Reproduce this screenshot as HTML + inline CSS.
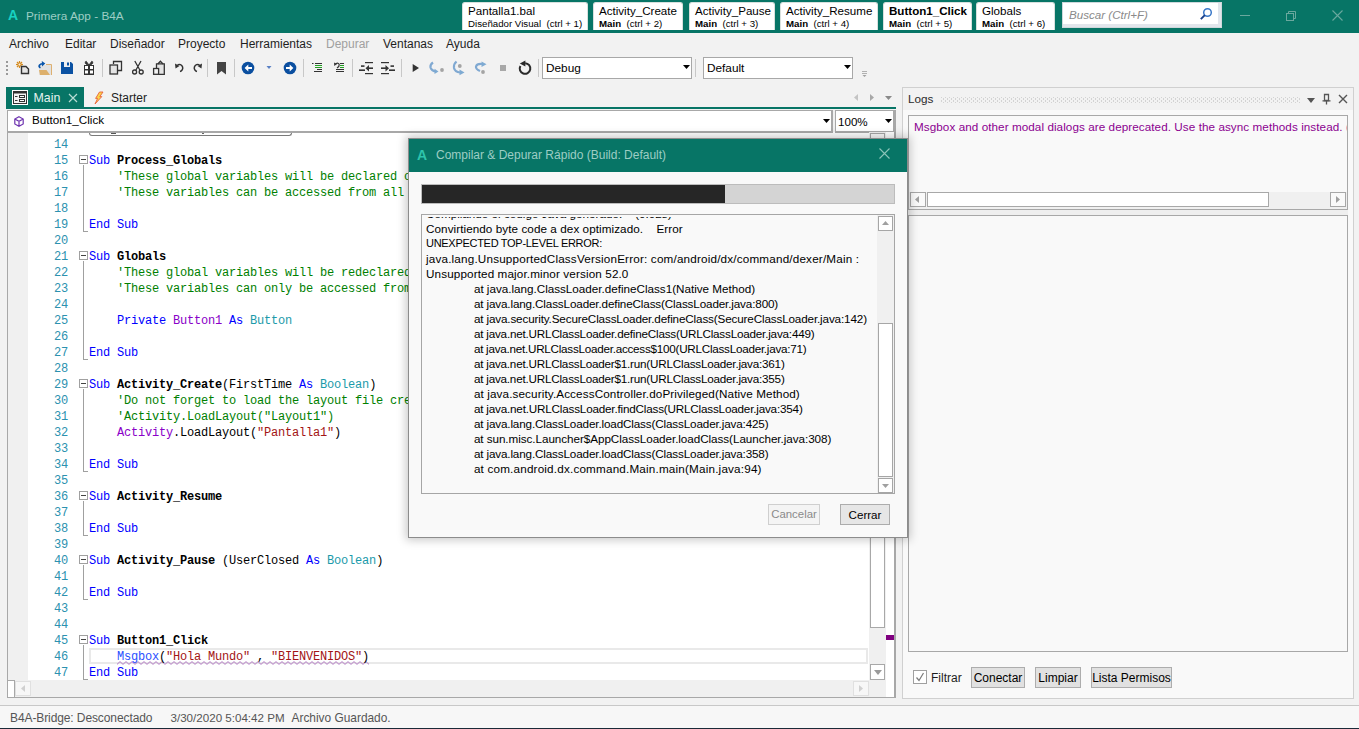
<!DOCTYPE html>
<html><head><meta charset="utf-8">
<style>
*{margin:0;padding:0;box-sizing:border-box}
html,body{width:1359px;height:729px;overflow:hidden;background:#f2f2f2;font-family:"Liberation Sans",sans-serif;font-size:12px;color:#000}
.a{position:absolute}
.t{position:absolute;white-space:nowrap;line-height:1}
#title{left:0;top:0;width:1359px;height:33px;background:#077566}
.tab{position:absolute;top:2px;height:28px;background:#fff;border:1px solid #d8e0de;border-bottom:none;border-radius:3px 3px 0 0}
.tab .n{position:absolute;left:5px;top:1.5px;font-size:11.6px;white-space:nowrap;line-height:1}
.tab .s{position:absolute;left:5px;top:15.5px;font-size:9.7px;white-space:nowrap;line-height:1}
.tab .s b{font-weight:bold}
.menu{position:absolute;top:38px;font-size:12px;color:#1e1e1e;white-space:nowrap;line-height:1}
.sep{position:absolute;top:59px;width:1px;height:18px;background:#c4c4c4}
.code{position:absolute;left:82px;top:0;margin-top:1px;letter-spacing:-0.2px;font-family:"Liberation Mono",monospace;font-size:12px;white-space:pre;line-height:16px}
.ln{position:absolute;margin-top:1px;letter-spacing:-0.2px;font-family:"Liberation Mono",monospace;font-size:12px;color:#2b91af;line-height:16px;text-align:right;width:40px;left:21px}
.fb{position:absolute;left:72px;width:9px;height:9px;border:1px solid #a0a0a0;background:#fff}
.fb:after{content:"";position:absolute;left:1px;top:3px;width:5px;height:1px;background:#444}
.fl{position:absolute;left:76px;width:5px;border-left:1px solid #a0a0a0;border-bottom:1px solid #a0a0a0}
.mb{color:#2a50ff}
.kw{color:#0000ff}.cm{color:#008000}.st{color:#a31515}.ty{color:#1b9aaa}.pu{color:#8a00c8}.bd{font-weight:bold}
.btn{position:absolute;background:#e1e1e1;border:1px solid #adadad;font-size:12px;text-align:center;line-height:18px}
</style></head><body>

<!-- title bar -->
<div id="title" class="a">
  <div class="t" style="left:8px;top:8px;font-size:14px;font-weight:bold;color:#18d2c2">A</div>
  <div class="t" style="left:26px;top:10.5px;font-size:11.8px;color:#9dcdc4">Primera App - B4A</div>
  <div class="tab" style="left:462px;width:126px"><div class="n">Pantalla1.bal</div><div class="s">Diseñador Visual&nbsp; (ctrl + 1)</div></div>
  <div class="tab" style="left:593px;width:90px"><div class="n">Activity_Create</div><div class="s"><b>Main</b>&nbsp; (ctrl + 2)</div></div>
  <div class="tab" style="left:689px;width:86px"><div class="n">Activity_Pause</div><div class="s"><b>Main</b>&nbsp; (ctrl + 3)</div></div>
  <div class="tab" style="left:780px;width:98px"><div class="n">Activity_Resume</div><div class="s"><b>Main</b>&nbsp; (ctrl + 4)</div></div>
  <div class="tab" style="left:883px;width:89px"><div class="n" style="font-weight:bold">Button1_Click</div><div class="s"><b>Main</b>&nbsp; (ctrl + 5)</div></div>
  <div class="tab" style="left:976px;width:79px"><div class="n">Globals</div><div class="s"><b>Main</b>&nbsp; (ctrl + 6)</div></div>
  <div class="a" style="left:1062px;top:2px;width:160px;height:26px;background:#fff;border:1px solid #d0d8dc;box-shadow:inset -3px -3px 0 #e2e6ec"></div>
  <div class="t" style="left:1069px;top:8.5px;font-size:11.6px;font-style:italic;color:#8a8a8a">Buscar (Ctrl+F)</div>
  <svg class="a" style="left:1199px;top:7px" width="14" height="14" viewBox="0 0 14 14"><circle cx="8.5" cy="5.5" r="3.8" fill="none" stroke="#3a78c8" stroke-width="1.5"/><line x1="5.8" y1="8.2" x2="1.8" y2="12.2" stroke="#1a3f8a" stroke-width="1.9"/></svg>
  <div class="a" style="left:1240px;top:15px;width:10px;height:1px;background:#6aa89e"></div>
  <svg class="a" style="left:1285px;top:10px" width="12" height="11" viewBox="0 0 12 11"><rect x="1.5" y="3.5" width="7" height="7" fill="none" stroke="#6aa89e"/><path d="M3.5 3.5V1.5H10.5V8.5H8.5" fill="none" stroke="#6aa89e"/></svg>
  <svg class="a" style="left:1332px;top:10px" width="11" height="11" viewBox="0 0 11 11"><path d="M0.5 0.5L10.5 10.5M10.5 0.5L0.5 10.5" stroke="#6aa89e" stroke-width="1.1"/></svg>
</div>

<!-- menu -->
<div class="menu" style="left:9px">Archivo</div>
<div class="menu" style="left:65px">Editar</div>
<div class="menu" style="left:110px">Diseñador</div>
<div class="menu" style="left:178px">Proyecto</div>
<div class="menu" style="left:240px">Herramientas</div>
<div class="menu" style="left:326px;color:#a0a0a0">Depurar</div>
<div class="menu" style="left:383px">Ventanas</div>
<div class="menu" style="left:446px">Ayuda</div>

<!-- toolbar placeholder -->
<div id="toolbar"><svg class="a" style="left:0;top:0" width="900" height="86" viewBox="0 0 900 86">
<g fill="#9a9a9a"><rect x="6" y="61" width="2" height="2"/><rect x="6" y="65" width="2" height="2"/><rect x="6" y="69" width="2" height="2"/><rect x="6" y="73" width="2" height="2"/></g>
<!-- new -->
<g stroke="#d58a1e" stroke-width="1.2"><line x1="19.5" y1="61" x2="19.5" y2="68"/><line x1="16" y1="64.5" x2="23" y2="64.5"/><line x1="17" y1="62" x2="22" y2="67"/><line x1="22" y1="62" x2="17" y2="67"/></g>
<circle cx="19.5" cy="64.5" r="1.5" fill="#f8f0e0" stroke="#d58a1e"/>
<path d="M21.5 66.5H26L28.5 69V73.5H21.5Z" fill="#e4e4e4" stroke="#333" stroke-width="1.4"/>
<!-- open -->
<rect x="39" y="65" width="12.5" height="10" fill="#e2e2e2"/>
<path d="M46 64.5H51.5V75" fill="none" stroke="#deb070" stroke-width="1"/>
<path d="M39 70H46.5L50 75H40Z" fill="#ddb06c"/>
<path d="M40.5 67.8Q38.3 66.6 39.6 65Q41 63.6 43.8 63.8" fill="none" stroke="#0a55aa" stroke-width="1.7"/>
<path d="M41.8 61L45.3 63.6L42 66.6Z" fill="#0a55aa"/>
<!-- save -->
<path d="M61 62H71L73 64V74H61Z" fill="#0b52a3"/>
<rect x="64" y="62" width="6" height="5" fill="#f0f0f0"/>
<rect x="67" y="62.5" width="2" height="3" fill="#0b52a3"/>
<!-- gift -->
<rect x="84" y="65" width="10" height="10" fill="#333"/>
<g fill="#fff"><rect x="85" y="66" width="3" height="3"/><rect x="90" y="66" width="3" height="3"/><rect x="85" y="70.5" width="3" height="3"/><rect x="90" y="70.5" width="3" height="3"/></g>
<path d="M89 65L86.2 61.2Q85 61.3 85.2 63.2Q85.6 64.6 89 65ZM89 65L91.8 61.2Q93 61.3 92.8 63.2Q92.4 64.6 89 65Z" fill="#333" stroke="#333" stroke-width="0.8"/>
<rect x="102" y="59" width="1" height="18" fill="#c8c8c8"/>
<!-- copy -->
<path d="M113.5 64V61.5H121.5V70.5H118" fill="none" stroke="#333" stroke-width="1.3"/>
<rect x="110" y="65" width="7.5" height="9" fill="#e4e4e4" stroke="#333" stroke-width="1.3"/>
<!-- cut -->
<g fill="none" stroke="#333" stroke-width="1.3"><circle cx="134.6" cy="72" r="2"/><circle cx="141.2" cy="72" r="2"/><path d="M135.8 70.2L141 61M140 70.2L134.8 61"/></g>
<!-- paste -->
<path d="M156.5 68V63.8H164.3V74.3H158.5" fill="#e4e4e4" stroke="#333" stroke-width="1.3"/>
<path d="M157.8 64L160.4 61.2L163 64" fill="none" stroke="#333" stroke-width="1.3"/>
<rect x="153.6" y="68.5" width="5" height="5.8" fill="#f4f4f4" stroke="#333" stroke-width="1.3"/>
<!-- undo -->
<path d="M177.5 64.8A3.6 3.6 0 1 1 180 71.5" fill="none" stroke="#333" stroke-width="1.5"/>
<path d="M175 63.5L175.5 68.5L179.5 66Z" fill="#333"/>
<!-- redo -->
<path d="M199.5 64.8A3.6 3.6 0 1 0 197 71.5" fill="none" stroke="#333" stroke-width="1.5"/>
<path d="M202 63.5L201.5 68.5L197.5 66Z" fill="#333"/>
<rect x="207" y="59" width="1" height="18" fill="#c8c8c8"/>
<!-- bookmark -->
<path d="M217 62H226V74.5L221.5 71L217 74.5Z" fill="#444"/>
<rect x="234" y="59" width="1" height="18" fill="#c8c8c8"/>
<!-- back -->
<circle cx="248" cy="68" r="6.3" fill="#0b4fa0"/>
<path d="M252 68H246" stroke="#fff" stroke-width="2"/><path d="M248.3 64.6L244.6 68L248.3 71.4Z" fill="#fff"/>
<path d="M266.5 66H271.5L269 69Z" fill="#5a80c4"/>
<!-- fwd -->
<circle cx="290" cy="68" r="6.3" fill="#0b4fa0"/>
<path d="M286 68H292" stroke="#fff" stroke-width="2"/><path d="M289.7 64.6L293.4 68L289.7 71.4Z" fill="#fff"/>
<rect x="303" y="59" width="1" height="18" fill="#c8c8c8"/>
<!-- block comment -->
<g fill="#333"><rect x="312" y="63" width="1.5" height="1"/><rect x="315" y="63" width="7" height="1"/><rect x="317" y="69" width="5" height="1"/><rect x="314" y="71" width="8" height="1"/></g>
<g fill="#22a022"><rect x="315" y="65" width="7" height="1"/><rect x="315" y="67" width="7" height="1"/></g>
<!-- uncomment -->
<g fill="#333"><rect x="340" y="63" width="4" height="1"/><rect x="336" y="69" width="8" height="1"/><rect x="336" y="71" width="8" height="1"/></g>
<g fill="#22a022"><rect x="340" y="65" width="4" height="1"/><rect x="340" y="67" width="4" height="1"/></g>
<path d="M335.5 64Q338.5 62.2 339.2 64.5Q339.5 66.5 337 68" fill="none" stroke="#333" stroke-width="1.2"/>
<path d="M334 62.5L334.3 66L337 64Z" fill="#333"/>
<rect x="352" y="59" width="1" height="18" fill="#c8c8c8"/>
<!-- outdent -->
<g fill="#333"><rect x="365" y="62" width="8" height="1.2"/><rect x="361" y="65.3" width="3.5" height="1.6"/><rect x="359" y="69.4" width="6" height="1.6"/><rect x="365" y="73" width="8" height="1.2"/><rect x="368" y="67.4" width="5" height="1.6"/></g>
<path d="M365.5 68.2L369 65V71.4Z" fill="#333"/>
<!-- indent -->
<g fill="#333"><rect x="381" y="62" width="8" height="1.2"/><rect x="390.5" y="65.3" width="3.5" height="1.6"/><rect x="389" y="69.4" width="6" height="1.6"/><rect x="381" y="73" width="8" height="1.2"/><rect x="381" y="67.4" width="5" height="1.6"/></g>
<path d="M389 68.2L385.5 65V71.4Z" fill="#333"/>
<rect x="401" y="59" width="1" height="18" fill="#c8c8c8"/>
<!-- play -->
<path d="M412.7 64V72L419 68Z" fill="#333"/>
<!-- step into -->
<path d="M433 62.5Q430 64.5 430.5 67.5Q431.5 71 435.5 71.5" fill="none" stroke="#80a9d2" stroke-width="2.2"/>
<path d="M434.5 68.8L438.5 71.5L434.5 74Z" fill="#7eaad2"/>
<circle cx="442" cy="70" r="1.9" fill="#a4a4a4"/>
<!-- step over -->
<path d="M456.5 61.5Q453.5 64 454 68Q455 72 460 72.5" fill="none" stroke="#80a9d2" stroke-width="2.2"/>
<path d="M459.5 69.5L464.5 72.5L459.5 75.2Z" fill="#7eaad2"/>
<circle cx="459.8" cy="66" r="1.9" fill="#a4a4a4"/>
<!-- step out -->
<path d="M480 71Q475.5 69 476 66.5Q477 63.5 482 64" fill="none" stroke="#80a9d2" stroke-width="2.2"/>
<path d="M481.5 61.5L486.5 64.3L481.5 67Z" fill="#7eaad2"/>
<circle cx="483" cy="72" r="1.9" fill="#a4a4a4"/>
<!-- stop -->
<rect x="500" y="65" width="6" height="6" fill="#a8a8a8"/>
<!-- restart -->
<path d="M520.4 65.9A5.3 5.3 0 1 0 525.2 63.2" fill="none" stroke="#2a2a2a" stroke-width="2"/>
<path d="M519.8 63.4L525.4 60.6V66.4Z" fill="#2a2a2a"/>
<rect x="538" y="59" width="1" height="18" fill="#c8c8c8"/>
<!-- combo overflow -->
<path d="M862 71.5H867M862 73.5H867" stroke="#a0a0a0" stroke-width="0.8"/><path d="M862.5 75L866.5 75L864.5 77Z" fill="#a0a0a0"/>
<rect x="695" y="59" width="1" height="18" fill="#c8c8c8"/>
</svg>
<div class="a" style="left:542px;top:57px;width:150px;height:22px;background:#fff;border:1px solid #a8a8a8"></div>
<div class="t" style="left:546px;top:63px;font-size:11.8px">Debug</div>
<svg class="a" style="left:683px;top:65px" width="7" height="4"><path d="M0 0H7L3.5 4Z" fill="#000"/></svg>
<div class="a" style="left:703px;top:57px;width:150px;height:22px;background:#fff;border:1px solid #a8a8a8"></div>
<div class="t" style="left:707px;top:63px;font-size:11.8px">Default</div>
<svg class="a" style="left:844px;top:65px" width="7" height="4"><path d="M0 0H7L3.5 4Z" fill="#000"/></svg>
</div>

<!-- editor tabs -->
<div class="a" style="left:6px;top:87px;width:78px;height:21px;background:#077566"></div>
<svg class="a" style="left:12px;top:90px" width="16" height="15" viewBox="0 0 16 15"><rect x="0" y="0" width="16" height="15" fill="#fff"/><rect x="1.5" y="1.5" width="13" height="12" fill="#f4f4f4" stroke="#333" stroke-width="1"/><rect x="1" y="1" width="14" height="2.5" fill="#333"/><rect x="3" y="6" width="2.5" height="1" fill="#333"/><rect x="3" y="10" width="2.5" height="1" fill="#333"/><rect x="7.5" y="5.5" width="5" height="2" fill="#fff" stroke="#333" stroke-width="1"/><rect x="7.5" y="9.5" width="5" height="2" fill="#fff" stroke="#333" stroke-width="1"/></svg>
<div class="t" style="left:33.5px;top:92px;font-size:12.4px;color:#e4f2ee">Main</div>
<svg class="a" style="left:68px;top:93px" width="10" height="10"><path d="M1 1L9 9M9 1L1 9" stroke="#b8dcd4" stroke-width="1.2"/></svg>
<svg class="a" style="left:93px;top:91px" width="11" height="14" viewBox="0 0 11 14"><path d="M6.5 1L10 1L6.8 5.6H8.8L2 13L4.6 7.4H2.6Z" fill="#fad448" stroke="#e8603a" stroke-width="0.9" stroke-linejoin="round"/></svg>
<div class="t" style="left:111px;top:92px;font-size:12px;color:#1e1e1e">Starter</div>
<svg class="a" style="left:853px;top:93px" width="40" height="9"><path d="M5 1V8L1 4.5Z" fill="#c4c4c4"/><path d="M17 1V8L21 4.5Z" fill="#a8a8a8"/><path d="M32 3H39L35.5 7Z" fill="#8a8a8a"/></svg>
<div class="a" style="left:6px;top:107px;width:890px;height:2px;background:#077566"></div>

<!-- editor -->
<div class="a" style="left:7px;top:110px;width:889px;height:588px;background:#f0f0f0"></div>
<div id="codearea" class="a" style="left:7px;top:132px;width:887px;height:548px;background:#fff;overflow:hidden">
  <div class="a" style="left:0;top:0;width:21px;height:548px;background:#f0f0f0"></div>
<div class="a" style="left:82px;top:516px;width:779px;height:16px;border:2px solid #e9e9e9"></div>
<svg class="a" style="left:110px;top:529px" width="252" height="4"><defs><pattern id="wv" width="6" height="4" patternUnits="userSpaceOnUse"><path d="M0 3.2C1.5 3.2 1.5 0.8 3 0.8C4.5 0.8 4.5 3.2 6 3.2" fill="none" stroke="#b47cc4" stroke-width="1"/></pattern></defs><rect width="252" height="4" fill="url(#wv)"/></svg>
<div class="ln" style="top:4px">14</div>
<div class="ln" style="top:20px">15</div>
<div class="code" style="top:20px"><span class="kw">Sub</span> <span class="bd">Process_Globals</span></div>
<div class="ln" style="top:36px">16</div>
<div class="code" style="top:36px">    <span class="cm">'These global variables will be declared once when the application starts.</span></div>
<div class="ln" style="top:52px">17</div>
<div class="code" style="top:52px">    <span class="cm">'These variables can be accessed from all modules.</span></div>
<div class="ln" style="top:68px">18</div>
<div class="ln" style="top:84px">19</div>
<div class="code" style="top:84px"><span class="kw">End Sub</span></div>
<div class="ln" style="top:100px">20</div>
<div class="ln" style="top:116px">21</div>
<div class="code" style="top:116px"><span class="kw">Sub</span> <span class="bd">Globals</span></div>
<div class="ln" style="top:132px">22</div>
<div class="code" style="top:132px">    <span class="cm">'These global variables will be redeclared each time the activity is created.</span></div>
<div class="ln" style="top:148px">23</div>
<div class="code" style="top:148px">    <span class="cm">'These variables can only be accessed from this module.</span></div>
<div class="ln" style="top:164px">24</div>
<div class="ln" style="top:180px">25</div>
<div class="code" style="top:180px">    <span class="kw">Private</span> <span class="pu">Button1</span> <span class="kw">As</span> <span class="ty">Button</span></div>
<div class="ln" style="top:196px">26</div>
<div class="ln" style="top:212px">27</div>
<div class="code" style="top:212px"><span class="kw">End Sub</span></div>
<div class="ln" style="top:228px">28</div>
<div class="ln" style="top:244px">29</div>
<div class="code" style="top:244px"><span class="kw">Sub</span> <span class="bd">Activity_Create</span>(FirstTime <span class="kw">As</span> <span class="ty">Boolean</span>)</div>
<div class="ln" style="top:260px">30</div>
<div class="code" style="top:260px">    <span class="cm">'Do not forget to load the layout file created with the visual designer. For example:</span></div>
<div class="ln" style="top:276px">31</div>
<div class="code" style="top:276px">    <span class="cm">'Activity.LoadLayout("Layout1")</span></div>
<div class="ln" style="top:292px">32</div>
<div class="code" style="top:292px">    <span class="pu">Activity</span>.LoadLayout(<span class="st">"Pantalla1"</span>)</div>
<div class="ln" style="top:308px">33</div>
<div class="ln" style="top:324px">34</div>
<div class="code" style="top:324px"><span class="kw">End Sub</span></div>
<div class="ln" style="top:340px">35</div>
<div class="ln" style="top:356px">36</div>
<div class="code" style="top:356px"><span class="kw">Sub</span> <span class="bd">Activity_Resume</span></div>
<div class="ln" style="top:372px">37</div>
<div class="ln" style="top:388px">38</div>
<div class="code" style="top:388px"><span class="kw">End Sub</span></div>
<div class="ln" style="top:404px">39</div>
<div class="ln" style="top:420px">40</div>
<div class="code" style="top:420px"><span class="kw">Sub</span> <span class="bd">Activity_Pause</span> (UserClosed <span class="kw">As</span> <span class="ty">Boolean</span>)</div>
<div class="ln" style="top:436px">41</div>
<div class="ln" style="top:452px">42</div>
<div class="code" style="top:452px"><span class="kw">End Sub</span></div>
<div class="ln" style="top:468px">43</div>
<div class="ln" style="top:484px">44</div>
<div class="ln" style="top:500px">45</div>
<div class="code" style="top:500px"><span class="kw">Sub</span> <span class="bd">Button1_Click</span></div>
<div class="ln" style="top:516px">46</div>
<div class="code" style="top:516px">    <span class="mb">Msgbox</span>(<span class="st">"Hola Mundo"</span> , <span class="st">"BIENVENIDOS"</span>)</div>
<div class="ln" style="top:532px">47</div>
<div class="code" style="top:532px"><span class="kw">End Sub</span></div>
<div class="fb" style="top:23px"></div>
<div class="fl" style="top:33px;height:67px"></div>
<div class="fb" style="top:119px"></div>
<div class="fl" style="top:129px;height:99px"></div>
<div class="fb" style="top:247px"></div>
<div class="fl" style="top:257px;height:83px"></div>
<div class="fb" style="top:359px"></div>
<div class="fl" style="top:369px;height:35px"></div>
<div class="fb" style="top:423px"></div>
<div class="fl" style="top:433px;height:35px"></div>
<div class="fb" style="top:503px"></div>
<div class="fl" style="top:513px;height:35px"></div>
</div>

<div class="a" style="left:7px;top:110px;width:826px;height:23px;background:#fff;border:2px solid #a8a8a8;border-top:1px solid #a8a8a8;border-left:1px solid #a8a8a8"></div>
<div class="a" style="left:835px;top:110px;width:60px;height:23px;background:#fff;border:2px solid #a8a8a8;border-top:1px solid #a8a8a8;border-left:1px solid #a8a8a8"></div>
<svg class="a" style="left:14px;top:116px" width="10" height="11" viewBox="0 0 10 11"><path d="M5 0.8L9.2 3V8L5 10.2L0.8 8V3Z M0.8 3L5 5.3L9.2 3M5 5.3V10.2" fill="none" stroke="#6f35b0" stroke-width="1.2"/></svg>
<div class="t" style="left:32px;top:114px;font-size:11.7px">Button1_Click</div>
<svg class="a" style="left:823px;top:119px" width="7" height="4"><path d="M0 0H7L3.5 4Z" fill="#000"/></svg>
<div class="t" style="left:838px;top:116px;font-size:11.6px">100%</div>
<svg class="a" style="left:885px;top:119px" width="7" height="4"><path d="M0 0H7L3.5 4Z" fill="#000"/></svg>

<div class="a" style="left:89px;top:133px;width:203px;height:3px;background:#fff;border:1px solid #7a7a7a;border-top:none;border-radius:0 0 3px 3px"></div>
<div class="a" style="left:111px;top:133px;width:5px;height:1px;background:#555"></div>
<div class="a" style="left:202px;top:133px;width:2px;height:1px;background:#666"></div>
<!-- editor scrollbars -->
<div class="a" style="left:869px;top:132px;width:17px;height:548px;background:#f0f0f0"></div>
<div class="a" style="left:870px;top:133px;width:15px;height:15px;background:#fafafa;border:1px solid #a8a8a8"></div>
<div class="a" style="left:870px;top:150px;width:15px;height:478px;background:#fff;border:1px solid #a8a8a8"></div>
<div class="a" style="left:870px;top:664px;width:15px;height:16px;background:#fff;border:1px solid #a8a8a8"></div>
<svg class="a" style="left:874px;top:670px" width="8" height="5"><path d="M0 0H8L4 5Z" fill="#9a9a9a"/></svg>
<div class="a" style="left:886px;top:132px;width:8px;height:565px;background:#fff"></div>
<div class="a" style="left:886px;top:635px;width:8px;height:5px;background:#800080"></div>
<div class="a" style="left:894px;top:110px;width:2px;height:588px;background:#a8a8a8"></div>
<div class="a" style="left:7px;top:680px;width:879px;height:17px;background:#f0f0f0"></div>
<div class="a" style="left:8px;top:680px;width:7px;height:17px;background:#fff;border:1px solid #a8a8a8;border-width:1px 1px 0 0"></div>
<div class="a" style="left:15px;top:681px;width:16px;height:15px;background:#f7f7f7;border:1px solid #e0e0e0"></div>
<svg class="a" style="left:21px;top:685px" width="4" height="7"><path d="M4 0V7L0 3.5Z" fill="#d0d0d0"/></svg>
<div class="a" style="left:853px;top:681px;width:16px;height:15px;background:#f7f7f7;border:1px solid #e0e0e0"></div>
<svg class="a" style="left:859px;top:685px" width="4" height="7"><path d="M0 0V7L4 3.5Z" fill="#d0d0d0"/></svg>
<div class="a" style="left:7px;top:697px;width:889px;height:1px;background:#a8a8a8"></div>
<div class="a" style="left:7px;top:110px;width:1px;height:588px;background:#a8a8a8"></div>

<!-- logs -->
<div class="a" style="left:902px;top:87px;width:452px;height:612px;border:1px solid #d0d0d0;background:#f9f9f9"></div>
<div class="a" style="left:903px;top:88px;width:450px;height:22px;background:#f2f2f2"></div>
<div class="t" style="left:908px;top:93px;font-size:11.7px;color:#2a2a2a">Logs</div>
<svg class="a" style="left:941px;top:96px" width="359" height="7"><defs><pattern id="dp" width="4" height="4" patternUnits="userSpaceOnUse"><rect x="0" y="0.5" width="1" height="1" fill="#b4b4b4"/><rect x="2" y="2.5" width="1" height="1" fill="#b4b4b4"/></pattern></defs><rect x="0" y="1" width="359" height="6" fill="url(#dp)"/></svg>
<svg class="a" style="left:1307px;top:98px" width="8" height="5"><path d="M0 0H8L4 5Z" fill="#555"/></svg>
<svg class="a" style="left:1322px;top:93px" width="9" height="12"><path d="M2.5 1.5H6.5V7.5H2.5Z" fill="none" stroke="#555" stroke-width="1.3"/><path d="M0.5 7.8H8.5M4.5 8V11.5" stroke="#555" stroke-width="1.3"/></svg>
<svg class="a" style="left:1338px;top:94px" width="10" height="10"><path d="M1 1L9 9M9 1L1 9" stroke="#555" stroke-width="1.4"/></svg>
<div class="a" style="left:908px;top:115px;width:440px;height:95px;border:1px solid #a8a8a8;background:#f9f9f9"></div>
<div class="t" style="left:914px;top:121px;font-size:11.7px;letter-spacing:0.065px;color:#8b0090;width:433px;overflow:hidden">Msgbox and other modal dialogs are deprecated. Use the async methods instead. (</div>
<div class="a" style="left:909px;top:192px;width:438px;height:17px;background:#f0f0f0"></div>
<div class="a" style="left:910px;top:192px;width:16px;height:15px;background:#fafafa;border:1px solid #a8a8a8"></div>
<svg class="a" style="left:915px;top:196px" width="4" height="7"><path d="M4 0V7L0 3.5Z" fill="#a0a0a0"/></svg>
<div class="a" style="left:927px;top:192px;width:342px;height:15px;background:#fff;border:1px solid #a8a8a8"></div>
<div class="a" style="left:1330px;top:192px;width:16px;height:15px;background:#fafafa;border:1px solid #a8a8a8"></div>
<svg class="a" style="left:1336px;top:196px" width="4" height="7"><path d="M0 0V7L4 3.5Z" fill="#a0a0a0"/></svg>
<div class="a" style="left:908px;top:210px;width:440px;height:5px;background:#efefef"></div>
<div class="a" style="left:908px;top:215px;width:440px;height:437px;border:1px solid #a8a8a8;background:#f9f9f9"></div>
<div class="a" style="left:913px;top:670px;width:14px;height:14px;background:#fff;border:1px solid #a0a0a0"></div>
<svg class="a" style="left:914px;top:671px" width="12" height="12"><path d="M2.5 6.5L5 9.5L9.5 2" fill="none" stroke="#7a7a7a" stroke-width="1.2"/></svg>
<div class="t" style="left:931px;top:672px;font-size:12px;color:#1e1e1e">Filtrar</div>
<div class="btn" style="left:971px;top:667px;width:54px;height:21px"></div>
<div class="t" style="left:971px;top:672px;width:54px;text-align:center;font-size:12px">Conectar</div>
<div class="btn" style="left:1035px;top:667px;width:46px;height:21px"></div>
<div class="t" style="left:1035px;top:672px;width:46px;text-align:center;font-size:12px">Limpiar</div>
<div class="btn" style="left:1091px;top:667px;width:81px;height:21px"></div>
<div class="t" style="left:1091px;top:672px;width:81px;text-align:center;font-size:12px">Lista Permisos</div>

<!-- status -->
<div class="a" style="left:0;top:705px;width:1359px;height:1px;background:#c8c8c8"></div>
<div class="a" style="left:0;top:706px;width:1359px;height:22px;background:#f7f7f7"></div>
<div class="a" style="left:0;top:728px;width:1359px;height:1px;background:#1a2a38"></div>
<div class="t" style="left:10px;top:711.5px;font-size:12px;letter-spacing:-0.1px;color:#555">B4A-Bridge: Desconectado</div>
<div class="t" style="left:170.5px;top:711.5px;font-size:11.6px;color:#555">3/30/2020 5:04:42 PM</div>
<div class="t" style="left:291.5px;top:713px;font-size:11.9px;color:#555">Archivo Guardado.</div>

<!-- dialog placeholder -->
<div id="dialog"><div class="a" style="left:408px;top:138px;width:500px;height:400px;background:#f9f9f9;border:1px solid #8c8c8c;box-shadow:0 0 9px 2px rgba(0,0,0,0.22)">
  <div class="a" style="left:0;top:0;width:498px;height:33px;background:#077566"></div>
  <div class="t" style="left:8px;top:9px;font-size:14px;font-weight:bold;color:#2ec4ac">A</div>
  <div class="t" style="left:27px;top:10px;font-size:12px;color:#9dcdc4">Compilar &amp; Depurar Rápido (Build: Default)</div>
  <svg class="a" style="left:470px;top:9px" width="12" height="12" viewBox="0 0 12 12"><path d="M0.5 0.5L10.5 10.5M10.5 0.5L0.5 10.5" stroke="#8cc4b8" stroke-width="1.1"/></svg>
  <div class="a" style="left:12px;top:45px;width:474px;height:20px;background:#d4d4d4;border:1px solid #bcbcbc"></div>
  <div class="a" style="left:13px;top:46px;width:303px;height:18px;background:#262626"></div>
  <div class="a" style="left:12px;top:75px;width:474px;height:280px;background:#f9f9f9;border:1px solid #a6a6a6;overflow:hidden">
    <div class="a" style="left:0;top:-9.5px;width:456px;font-size:11.7px;line-height:15px;white-space:pre;color:#000"><div style="position:absolute;left:4px;top:0px;letter-spacing:0px">Compilando el código Java generado.    (0.02s)</div><div style="position:absolute;left:4px;top:15px;letter-spacing:0.068px">Convirtiendo byte code a dex optimizado.    Error</div><div style="position:absolute;left:4px;top:30px;letter-spacing:-0.29px;font-size:11px">UNEXPECTED TOP-LEVEL ERROR:</div><div style="position:absolute;left:4px;top:45px;letter-spacing:0.181px">java.lang.UnsupportedClassVersionError: com/android/dx/command/dexer/Main :</div><div style="position:absolute;left:4px;top:60px;letter-spacing:0.121px">Unsupported major.minor version 52.0</div><div style="position:absolute;left:51.9px;top:75px;letter-spacing:-0.015px">at java.lang.ClassLoader.defineClass1(Native Method)</div><div style="position:absolute;left:51.9px;top:90px;letter-spacing:-0.143px">at java.lang.ClassLoader.defineClass(ClassLoader.java:800)</div><div style="position:absolute;left:51.9px;top:105px;letter-spacing:-0.147px">at java.security.SecureClassLoader.defineClass(SecureClassLoader.java:142)</div><div style="position:absolute;left:51.9px;top:120px;letter-spacing:-0.204px">at java.net.URLClassLoader.defineClass(URLClassLoader.java:449)</div><div style="position:absolute;left:51.9px;top:135px;letter-spacing:-0.258px">at java.net.URLClassLoader.access$100(URLClassLoader.java:71)</div><div style="position:absolute;left:51.9px;top:150px;letter-spacing:-0.214px">at java.net.URLClassLoader$1.run(URLClassLoader.java:361)</div><div style="position:absolute;left:51.9px;top:165px;letter-spacing:-0.214px">at java.net.URLClassLoader$1.run(URLClassLoader.java:355)</div><div style="position:absolute;left:51.9px;top:180px;letter-spacing:0.119px">at java.security.AccessController.doPrivileged(Native Method)</div><div style="position:absolute;left:51.9px;top:195px;letter-spacing:-0.192px">at java.net.URLClassLoader.findClass(URLClassLoader.java:354)</div><div style="position:absolute;left:51.9px;top:210px;letter-spacing:-0.146px">at java.lang.ClassLoader.loadClass(ClassLoader.java:425)</div><div style="position:absolute;left:51.9px;top:225px;letter-spacing:-0.06px">at sun.misc.Launcher$AppClassLoader.loadClass(Launcher.java:308)</div><div style="position:absolute;left:51.9px;top:240px;letter-spacing:-0.146px">at java.lang.ClassLoader.loadClass(ClassLoader.java:358)</div><div style="position:absolute;left:51.9px;top:255px;letter-spacing:0.186px">at com.android.dx.command.Main.main(Main.java:94)</div></div>
    <div class="a" style="left:0;top:0;width:456px;height:2px;background:#f9f9f9"></div>
    <div class="a" style="left:455px;top:0;width:17px;height:278px;background:#f0f0f0"></div>
    <div class="a" style="left:456px;top:1px;width:15px;height:15px;background:#fff;border:1px solid #a6a6a6"></div>
    <svg class="a" style="left:460px;top:6px" width="7" height="4"><path d="M0 4H7L3.5 0Z" fill="#a0a0a0"/></svg>
    <div class="a" style="left:456px;top:108px;width:15px;height:154px;background:#fff;border:1px solid #a6a6a6"></div>
    <div class="a" style="left:456px;top:263px;width:15px;height:15px;background:#fff;border:1px solid #a6a6a6"></div>
    <svg class="a" style="left:460px;top:269px" width="7" height="4"><path d="M0 0H7L3.5 4Z" fill="#a0a0a0"/></svg>
  </div>
  <div class="a" style="left:359px;top:365px;width:52px;height:21px;background:#f4f4f4;border:1px solid #cfcfcf"></div>
  <div class="t" style="left:359px;top:370px;width:52px;text-align:center;font-size:11.4px;color:#8a8a8a">Cancelar</div>
  <div class="a" style="left:431px;top:365px;width:50px;height:21px;background:#e6e6e6;border:1px solid #acacac"></div>
  <div class="t" style="left:431px;top:370px;width:50px;text-align:center;font-size:11.6px;color:#000">Cerrar</div>
</div>
</div>
</body></html>
